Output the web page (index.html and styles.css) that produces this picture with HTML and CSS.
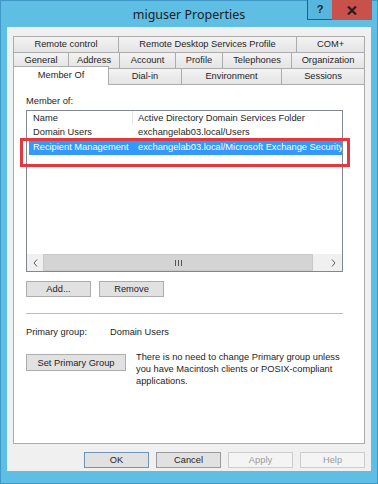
FILE: index.html
```html
<!DOCTYPE html>
<html lang="en">
<head>
    <meta charset="UTF-8">
    <meta name="viewport" content="width=device-width, initial-scale=1.0">
    <title>miguser Properties</title>
    <link rel="stylesheet" href="styles.css">
</head>
<body>

    <div class="window">
        <!-- Barra del titolo -->
        <div class="titlebar">
            <span class="title">miguser Properties</span>
            <div class="caption-buttons">
                <span class="cap-help">?</span>
                <span class="cap-close">
                    <svg width="10" height="9" viewBox="0 0 10 9"><path d="M1 0.5 L9 8.5 M9 0.5 L1 8.5" stroke="#2b1d1d" stroke-width="2.2"/></svg>
                </span>
            </div>
        </div>

        <div class="client">
            <!-- Schede -->
            <div class="tabs">
                <div class="tab-row">
                    <div class="tab tab-remote">Remote control</div>
                    <div class="tab tab-rdsp">Remote Desktop Services Profile</div>
                    <div class="tab">COM+</div>
                </div>
                <div class="tab-row">
                    <div class="tab tab-general">General</div>
                    <div class="tab tab-address">Address</div>
                    <div class="tab tab-account">Account</div>
                    <div class="tab tab-profile">Profile</div>
                    <div class="tab tab-phones">Telephones</div>
                    <div class="tab">Organization</div>
                </div>
                <div class="tab-row">
                    <div class="tab tab-member active">Member Of</div>
                    <div class="tab tab-dialin">Dial-in</div>
                    <div class="tab tab-env">Environment</div>
                    <div class="tab">Sessions</div>
                </div>
            </div>

            <div class="panel">
                <div class="caption-label">Member of:</div>

                <div class="listview">
                    <div class="lv-header">
                        <span class="col-name">Name</span>
                        <span class="col-folder">Active Directory Domain Services Folder</span>
                    </div>
                    <div class="lv-row">
                        <span class="col-name">Domain Users</span>
                        <span class="col-folder">exchangelab03.local/Users</span>
                    </div>
                    <div class="lv-row selected">
                        <span class="col-name">Recipient Management</span>
                        <span class="col-folder">exchangelab03.local/Microsoft Exchange Security Groups</span>
                    </div>
                    <div class="lv-fill"></div>
                    <div class="hscroll">
                        <span class="sb-btn sb-left">
                            <svg width="5" height="8" viewBox="0 0 5 8"><path d="M4 0.5 L1 4 L4 7.5" fill="none" stroke="#606060" stroke-width="1"/></svg>
                        </span>
                        <span class="sb-thumb">
                            <svg width="7" height="6" viewBox="0 0 7 6"><path d="M0.5 0 V6 M3.5 0 V6 M6.5 0 V6" stroke="#555" stroke-width="1"/></svg>
                        </span>
                        <span class="sb-track"></span>
                        <span class="sb-btn sb-right">
                            <svg width="5" height="8" viewBox="0 0 5 8"><path d="M1 0.5 L4 4 L1 7.5" fill="none" stroke="#606060" stroke-width="1"/></svg>
                        </span>
                    </div>
                </div>

                <div class="btn-row">
                    <button class="btn">Add...</button>
                    <button class="btn">Remove</button>
                </div>

                <div class="sep"></div>

                <div class="primary-row">
                    <span class="primary-label">Primary group:</span>
                    <span>Domain Users</span>
                </div>

                <div class="set-row">
                    <button class="btn btn-set">Set Primary Group</button>
                    <p class="set-note">There is no need to change Primary group unless<br>you have Macintosh clients or POSIX-compliant<br>applications.</p>
                </div>
            </div>

            <!-- Pulsanti del dialogo -->
            <div class="footer">
                <button class="btn btn-ok">OK</button>
                <button class="btn btn-cancel">Cancel</button>
                <button class="btn btn-disabled">Apply</button>
                <button class="btn btn-disabled">Help</button>
            </div>
        </div>

        <!-- Riquadro rosso di evidenziazione -->
        <div class="callout"></div>
    </div>

</body>
</html>
```

FILE: styles.css
```css
body {
    margin: 0;
    width: 378px;
    height: 484px;
    overflow: hidden;
    font-family: "Liberation Sans", Arial, sans-serif;
    font-size: 9.3px;
    color: #1e1e1e;
}
.window {
    position: relative;
    box-sizing: border-box;
    width: 378px;
    height: 484px;
    background-color: #5ebee4;
    border: 1px solid #3f98c6;
}
.titlebar {
    height: 26px;
    display: grid;
    grid-template-columns: 70px 1fr 70px;
}
.title {
    grid-column: 2;
    text-align: center;
    font-family: "Noto Sans", "Open Sans", sans-serif;
    font-size: 12.5px;
    line-height: 26px;
    padding-top: 1px;
    color: #1c1c1c;
}
.caption-buttons {
    display: flex;
    justify-content: flex-end;
    align-items: flex-start;
    margin-top: -1px;
    padding-right: 5px;
}
.cap-help {
    box-sizing: border-box;
    width: 25px;
    height: 20px;
    border: 1px solid #2f5d78;
    border-top: 0;
    border-right: 0;
    background-color: #58b6dc;
    font-weight: bold;
    font-size: 11px;
    line-height: 19px;
    text-align: center;
    color: #1b2833;
}
.cap-close {
    width: 40px;
    height: 20px;
    background-color: #c8524b;
    display: flex;
    align-items: center;
    justify-content: center;
}
.client {
    box-sizing: border-box;
    height: 444px;
    margin: 0 6px;
    padding: 9px 6px 0;
    background-color: #f0f0f0;
}
/* Schede */
.tab-row {
    display: flex;
    align-items: flex-start;
    height: 16px;
}
.tab {
    box-sizing: border-box;
    height: 16px;
    border: 1px solid #acacac;
    border-bottom: 0;
    background: linear-gradient(#f3f3f3, #e4e4e4);
    text-align: center;
    line-height: 15px;
    white-space: nowrap;
}
.tab + .tab {
    margin-left: -1px;
}
.tab:last-child {
    flex: 1;
}
.tab-remote { width: 106px; }
.tab-rdsp { width: 179px; }
.tab-general { width: 56px; }
.tab-address { width: 52px; }
.tab-account { width: 57px; }
.tab-profile { width: 48px; }
.tab-phones { width: 70px; }
.tab-member { width: 96px; }
.tab-dialin { width: 74px; }
.tab-env { width: 101px; }
.tab.active {
    position: relative;
    z-index: 1;
    height: 19px;
    margin-top: -2px;
    background: #ffffff;
    line-height: 16px;
}
/* Pannello */
.panel {
    box-sizing: border-box;
    height: 360px;
    border: 1px solid #acacac;
    background-color: #ffffff;
    padding: 10px 21px 0 12px;
}
.caption-label {
    line-height: 12px;
}
.listview {
    margin-top: 3px;
    height: 162px;
    box-sizing: border-box;
    border: 1px solid #828790;
    display: flex;
    flex-direction: column;
    overflow: hidden;
}
.lv-header, .lv-row {
    display: flex;
    white-space: nowrap;
}
.lv-header {
    height: 14px;
    line-height: 14px;
}
.lv-row {
    height: 15px;
    line-height: 15px;
}
.col-name {
    box-sizing: border-box;
    flex: none;
    width: 106px;
    padding-left: 6px;
}
.col-folder {
    padding-left: 5px;
}
.lv-header .col-name {
    border-right: 1px solid #e5e5e5;
}
.lv-row.selected {
    margin-left: 2px;
    background-color: #3399ff;
    color: #ffffff;
}
.lv-row.selected .col-name {
    width: 104px;
    padding-left: 4px;
}
.lv-fill {
    flex: 1;
}
.hscroll {
    display: flex;
    height: 17px;
    background-color: #f0f0f0;
}
.sb-btn {
    display: flex;
    align-items: center;
    justify-content: center;
}
.sb-left { width: 16px; }
.sb-right { width: 17px; }
.sb-thumb {
    box-sizing: border-box;
    width: 270px;
    background-color: #d4d4d4;
    border: 1px solid #c9c9c9;
    display: flex;
    align-items: center;
    justify-content: center;
}
.sb-track {
    flex: 1;
}
/* Pulsanti */
.btn {
    box-sizing: border-box;
    width: 65px;
    height: 16px;
    padding: 0;
    border: 1px solid #adadad;
    background-color: #e1e1e1;
    font-family: inherit;
    font-size: 9.3px;
    color: #1e1e1e;
    line-height: 14px;
}
.btn-row {
    display: flex;
    gap: 8px;
    margin-top: 9px;
}
.sep {
    margin-top: 16px;
    border-top: 1px solid #bcbcbc;
}
.primary-row {
    display: flex;
    margin-top: 12px;
    line-height: 12px;
}
.primary-label {
    width: 84px;
}
.set-row {
    display: flex;
    align-items: flex-start;
    margin-top: 13px;
}
.btn-set {
    width: 100px;
    height: 17px;
    margin-top: 3px;
}
.set-note {
    margin: 0;
    padding-left: 10px;
    line-height: 12px;
    white-space: nowrap;
}
.footer {
    display: flex;
    justify-content: flex-end;
    gap: 7px;
    margin-top: 8px;
}
.btn-ok {
    border-color: #6f95b5;
}
.btn-cancel {
    border-color: #9a9a9a;
}
.btn-disabled {
    background-color: #f4f4f4;
    border-color: #cccccc;
    color: #9a9a9a;
}
/* Evidenziazione */
.callout {
    position: absolute;
    left: 19px;
    top: 137px;
    width: 330px;
    height: 29px;
    box-sizing: border-box;
    border: 3px solid #e2383e;
}
```
